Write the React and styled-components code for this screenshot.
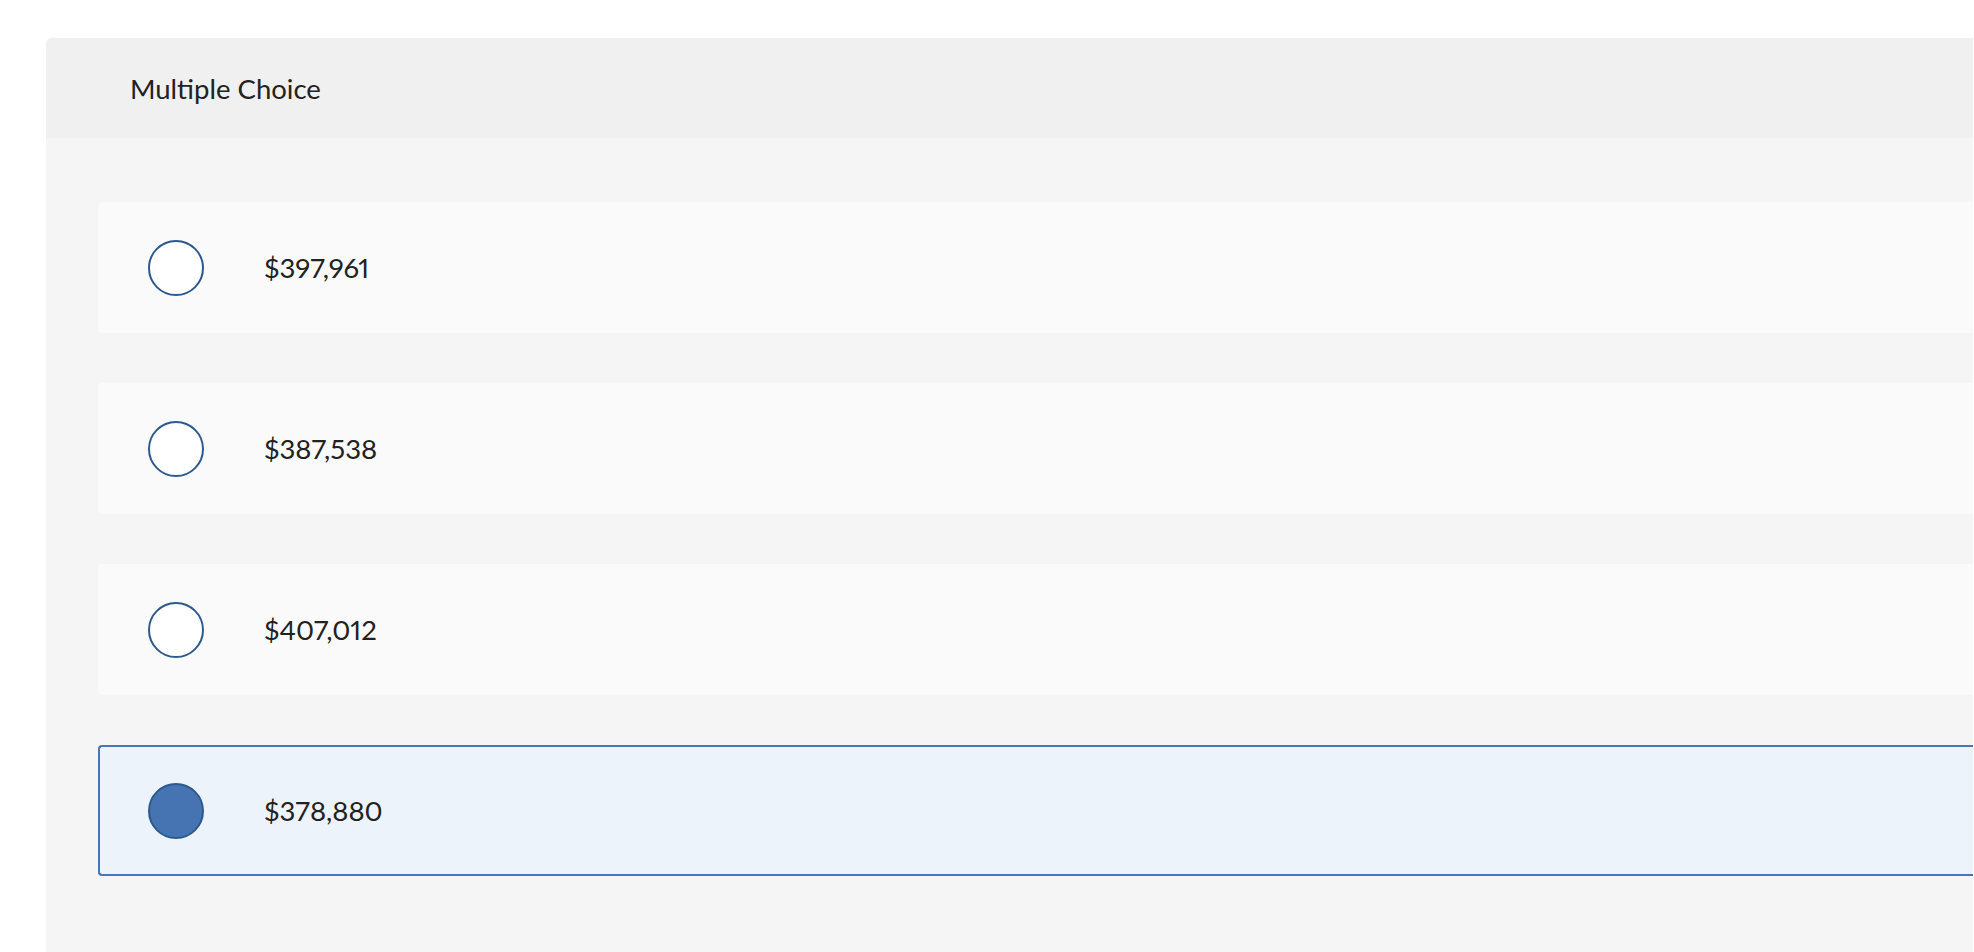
import React, { useState } from "react";
import styled, { createGlobalStyle } from "styled-components";

const GlobalStyle = createGlobalStyle`
  html, body {
    margin: 0;
    padding: 0;
    background: #fff;
    font-family: Lato, "Liberation Sans", Arial, sans-serif;
    color: #222;
  }
`;

const Page = styled.div`
  padding: 38px 1px 0 46px;
  height: 952px;
  box-sizing: border-box;
  overflow: hidden;
`;

const Card = styled.div`
  background-color: #f5f5f5;
  border-radius: 6px 0 0 0;
  min-height: 914px;
  overflow: hidden;
`;

const CardHeader = styled.div`
  height: 100px;
  background-color: #f0f0f0;
  display: flex;
  align-items: center;
  padding-left: 84px;
  font-size: 27.5px;
  color: #222;
`;

const OptionList = styled.div`
  display: flex;
  flex-direction: column;
  gap: 50px;
  padding: 64px 0 0 52px;
`;

const Option = styled.label`
  height: 131px;
  box-sizing: border-box;
  display: flex;
  align-items: center;
  gap: 60px;
  padding-left: ${(p) => (p.$selected ? "48px" : "50px")};
  background-color: ${(p) => (p.$selected ? "#ecf3fb" : "#fafafa")};
  border: ${(p) => (p.$selected ? "2px solid #4a77b4" : "none")};
  border-right: none;
  border-radius: 4px 0 0 4px;
  cursor: pointer;
`;

const Radio = styled.span`
  width: 56px;
  height: 56px;
  box-sizing: border-box;
  border-radius: 50%;
  border: 2px solid #2d5a8e;
  background-color: ${(p) => (p.$selected ? "#4674b3" : "#fff")};
  flex-shrink: 0;
`;

const Amount = styled.span`
  font-size: 27.5px;
  font-variant-numeric: proportional-nums;
  color: #222;
`;

const choices = ["$397,961", "$387,538", "$407,012", "$378,880"];

function App() {
  const [selected, setSelected] = useState(3);

  return (
    <>
      <GlobalStyle />
      <Page>
        <Card>
          <CardHeader>Multiple Choice</CardHeader>
          <OptionList>
            {choices.map((c, i) => (
              <Option
                key={c}
                $selected={selected === i}
                onClick={() => setSelected(i)}
              >
                <Radio $selected={selected === i} />
                <Amount>{c}</Amount>
              </Option>
            ))}
          </OptionList>
        </Card>
      </Page>
    </>
  );
}

export default App;
